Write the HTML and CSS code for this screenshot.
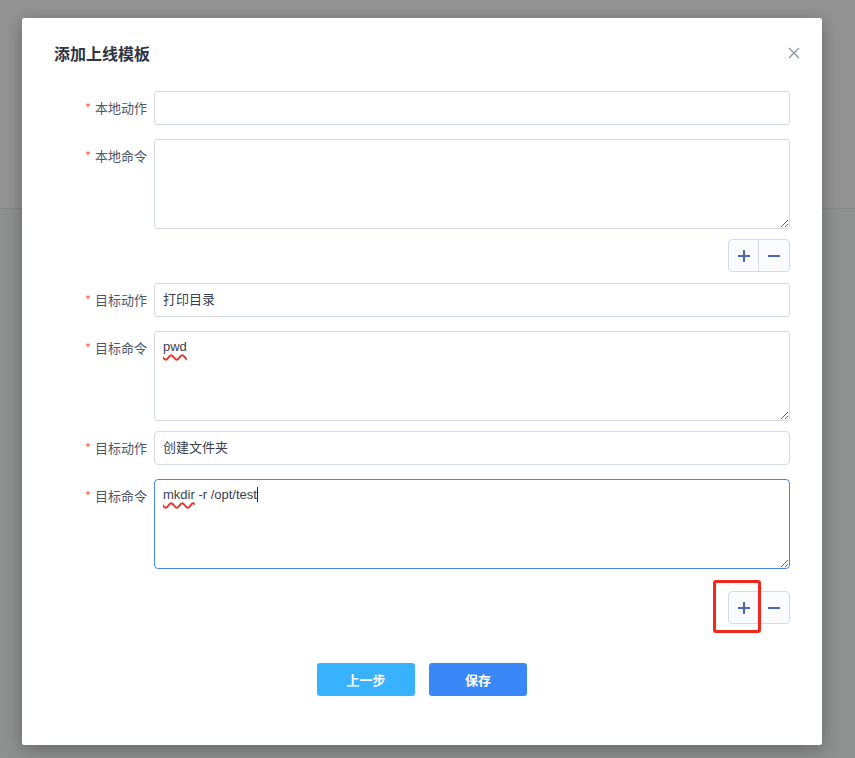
FILE: index.html
```html
<!DOCTYPE html>
<html lang="zh-CN">
<head>
  <meta charset="UTF-8" />
  <title>添加上线模板</title>
  <link rel="stylesheet" href="styles.css">
</head>
<body>
  <div class="dialog">
    <div class="dialog-header">
      <span class="dialog-title">添加上线模板</span>
      <button class="dialog-close" aria-label="关闭">
        <svg width="12" height="12" viewBox="0 0 12 12"><path d="M1 1L11 11M11 1L1 11" stroke="#8c909c" stroke-width="1.3" fill="none"/></svg>
      </button>
    </div>

    <div class="dialog-body">
      <div class="form-item gap-sm">
        <label class="form-label"><i>*</i>本地动作</label>
        <div class="input"></div>
      </div>
      <div class="form-item gap-md">
        <label class="form-label"><i>*</i>本地命令</label>
        <div class="textarea"></div>
      </div>
      <div class="ops gap-ops">
        <div class="btn-group">
          <button class="op-btn"><svg width="14" height="14" viewBox="0 0 14 14"><path d="M7 1V13M1 7H13" stroke="#4f66b8" stroke-width="2"/></svg></button>
          <button class="op-btn"><svg width="14" height="14" viewBox="0 0 14 14"><path d="M1 7H13" stroke="#4f66b8" stroke-width="2"/></svg></button>
        </div>
      </div>

      <div class="form-item gap-sm">
        <label class="form-label"><i>*</i>目标动作</label>
        <div class="input">打印目录</div>
      </div>
      <div class="form-item gap-md">
        <label class="form-label"><i>*</i>目标命令</label>
        <div class="textarea"><span class="typo">pwd</span></div>
      </div>
      <div class="form-item gap-sm">
        <label class="form-label"><i>*</i>目标动作</label>
        <div class="input">创建文件夹</div>
      </div>
      <div class="form-item gap-lg">
        <label class="form-label"><i>*</i>目标命令</label>
        <div class="textarea focused"><span class="typo">mkdir</span> -r /opt/test<span class="caret"></span></div>
      </div>
      <div class="ops">
        <div class="btn-group">
          <button class="op-btn"><svg width="14" height="14" viewBox="0 0 14 14"><path d="M7 1V13M1 7H13" stroke="#4f66b8" stroke-width="2"/></svg></button>
          <button class="op-btn"><svg width="14" height="14" viewBox="0 0 14 14"><path d="M1 7H13" stroke="#4f66b8" stroke-width="2"/></svg></button>
          <span class="mark"></span>
        </div>
      </div>
    </div>

    <div class="dialog-footer">
      <button class="btn btn-prev">上一步</button>
      <button class="btn btn-save">保存</button>
    </div>
  </div>
</body>
</html>
```

FILE: styles.css
```css
* {
  box-sizing: border-box;
}

body {
  margin: 0;
  height: 758px;
  overflow: hidden;
  font-family: "Noto Sans CJK SC", sans-serif;
  background: linear-gradient(#939393 0, #939393 208px, #878787 208px, #878787 209px, #8f9190 209px);
}

.dialog {
  margin: 18px 0 0 22px;
  width: 800px;
  height: 727px;
  background: #fff;
  border-radius: 2px;
  box-shadow: 0 4px 18px rgba(0,0,0,0.3);
  padding: 0 32px;
}

.dialog-header {
  display: flex;
  justify-content: space-between;
  align-items: flex-start;
  height: 47px;
  padding-top: 23px;
}

.dialog-title {
  font-size: 16px;
  line-height: 24px;
  font-weight: bold;
  color: #2f3445;
}

.dialog-close {
  border: none;
  background: none;
  padding: 0;
  margin: 0 -10px 0 0;
  width: 12px;
  height: 12px;
  margin-top: 6px;
  cursor: pointer;
}

.dialog-close svg {
  display: block;
}

.dialog-body {
  margin-top: 26px;
}

.form-item {
  display: flex;
  align-items: flex-start;
}

.gap-sm { margin-bottom: 14px; }
.gap-md { margin-bottom: 10px; }
.gap-ops { margin-bottom: 11px; }
.gap-lg { margin-bottom: 22px; }

.form-label {
  width: 100px;
  height: 34px;
  flex-shrink: 0;
  padding-right: 7px;
  text-align: right;
  font-size: 13px;
  line-height: 34px;
  color: #4f5569;
  overflow: hidden;
}

.form-label i {
  font-style: normal;
  color: #f56c6c;
  margin-right: 4px;
}

.input,
.textarea {
  flex: 1;
  border: 1px solid #d6d9e6;
  border-radius: 4px;
  font-size: 13px;
  color: #3a4050;
  padding: 0 8px;
  font-family: "Liberation Sans", "Noto Sans CJK SC", sans-serif;
}

.input {
  height: 34px;
  line-height: 32px;
  overflow: hidden;
}

.textarea {
  height: 90px;
  padding-top: 5px;
  line-height: 20px;
  resize: vertical;
  overflow: auto;
}

.textarea.focused {
  border-color: #4289ee;
}

.typo {
  text-decoration: underline wavy #e8302a;
  text-decoration-thickness: 1.5px;
  text-underline-offset: 3px;
}

.caret {
  display: inline-block;
  width: 1px;
  height: 15px;
  background: #222;
  vertical-align: -3px;
}

.ops {
  display: flex;
  justify-content: flex-end;
  height: 33px;
}

.btn-group {
  display: flex;
  position: relative;
}

.op-btn {
  width: 31px;
  height: 33px;
  padding: 0;
  border: 1px solid #d6d9e6;
  background: #f9fbff;
  display: flex;
  justify-content: center;
  align-items: center;
  cursor: pointer;
}

.op-btn:first-child {
  border-radius: 4px 0 0 4px;
}

.op-btn + .op-btn {
  margin-left: -1px;
  width: 32px;
  border-radius: 0 4px 4px 0;
}

.op-btn svg {
  display: block;
}

/* red annotation box */
.mark {
  position: absolute;
  left: -15px;
  top: -11px;
  width: 48px;
  height: 53px;
  border: 3px solid #f3281b;
  border-radius: 3px;
}

.dialog-footer {
  display: flex;
  justify-content: center;
  gap: 14px;
  margin-top: 39px;
}

.btn {
  width: 98px;
  height: 33px;
  border: none;
  border-radius: 3px;
  color: #fff;
  font-size: 13px;
  font-weight: bold;
  font-family: "Noto Sans CJK SC", sans-serif;
  cursor: pointer;
}

.btn-prev {
  background: #38b2ff;
}

.btn-save {
  background: #3a87f8;
}
```
